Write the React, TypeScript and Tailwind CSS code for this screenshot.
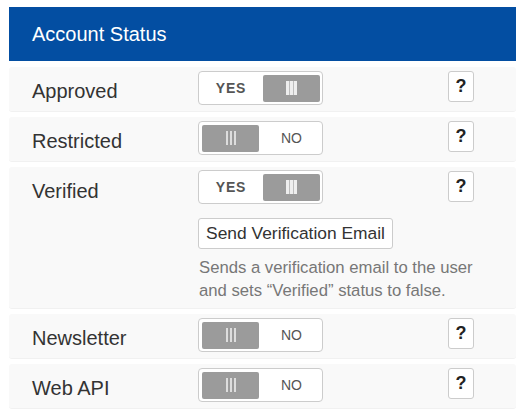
const font = "font-['Liberation_Sans',Arial,sans-serif]";

function Grip({ on }: { on: boolean }) {
  return on ? (
    <span className="h-[14px] w-[11px] bg-[repeating-linear-gradient(90deg,#eeeeee_0,#eeeeee_3px,#bdbdbd_3px,#bdbdbd_4px)]" />
  ) : (
    <span className="h-[14px] w-[10px] bg-[repeating-linear-gradient(90deg,#dddddd_0,#dddddd_2px,#9b9b9b_2px,#9b9b9b_4px)]" />
  );
}

function Toggle({ on }: { on: boolean }) {
  const handle = (
    <span className="flex h-[27px] w-[57px] items-center justify-center rounded-[2px] bg-[#9b9b9b]">
      <Grip on={on} />
    </span>
  );
  return (
    <div className="flex h-[34px] w-[125px] items-center rounded-[4px] border border-[#cccccc] bg-white">
      {on ? (
        <>
          <span className="w-[63px] pl-[1px] text-center text-[14px] font-bold tracking-[0.8px] text-[#555555]">YES</span>
          <span className="ml-[1px]">{handle}</span>
        </>
      ) : (
        <>
          <span className="ml-[3px]">{handle}</span>
          <span className="w-[62px] pl-[3px] text-center text-[14px] text-[#555555]">NO</span>
        </>
      )}
    </div>
  );
}

function Help() {
  return (
    <button className="flex h-[31px] w-[26px] items-center justify-center rounded-[3px] border border-[#cccccc] bg-white text-[18px] font-bold text-[#222222]">
      ?
    </button>
  );
}

function Row({ label, on, children }: { label: string; on: boolean; children?: React.ReactNode }) {
  const expanded = children != null;
  return (
    <div className={`flex rounded-[3px] border-b border-[#f1f1f1] bg-[#f9f9f9] pb-[6px] ${expanded ? "pt-[3px]" : "pt-[4px]"}`}>
      <div className={`w-[189px] pl-[23px] text-[20px] leading-[28px] text-[#333333] ${expanded ? "pt-[7px]" : "pt-[6px]"}`}>{label}</div>
      <div className="w-[250px]">
        <Toggle on={on} />
        {children}
      </div>
      <div className={expanded ? "pt-[1px]" : ""}>
        <Help />
      </div>
    </div>
  );
}

export default function App() {
  return (
    <div className={`${font} flex h-[418px] w-[526px] flex-col gap-[5px] bg-white pl-[9px] pr-[10px] pt-[7px]`}>
      <div className="mb-px flex h-[54px] items-center bg-[#034ea2] pl-[23px] text-[20px] text-white">Account Status</div>
      <Row label="Approved" on />
      <Row label="Restricted" on={false} />
      <Row label="Verified" on>
        <button className="mt-[14px] block h-[31px] w-[195px] rounded-[3px] border border-[#cccccc] bg-white text-center text-[17.4px] text-[#333333]">
          Send Verification Email
        </button>
        <p className="mt-[7px] w-[290px] pl-[1px] text-[16.7px] leading-[23px] text-[#777777]">
          Sends a verification email to the user and sets “Verified” status to false.
        </p>
      </Row>
      <Row label="Newsletter" on={false} />
      <Row label="Web API" on={false} />
    </div>
  );
}
